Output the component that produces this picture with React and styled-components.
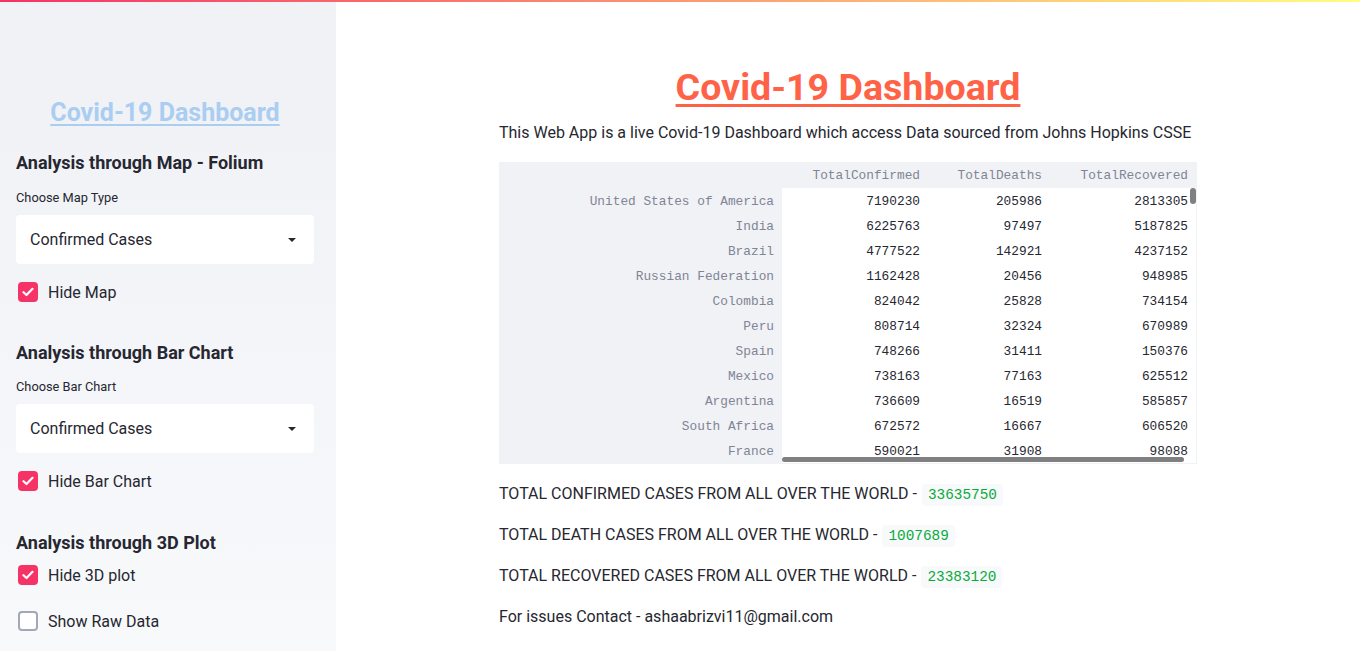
import React from "react";
import styled, { createGlobalStyle } from "styled-components";

const Global = createGlobalStyle`
  html, body { margin: 0; padding: 0; }
  body {
    font-family: Roboto, "Noto Sans", sans-serif;
    color: #262730;
    background: #ffffff;
  }
  * { box-sizing: border-box; }
`;

const Page = styled.div`
  width: 1360px;
  height: 651px;
  overflow: hidden;
  position: relative;
  display: flex;
`;

const Decoration = styled.div`
  position: absolute;
  top: 0;
  left: 0;
  right: 0;
  height: 2px;
  background: linear-gradient(90deg, #f63366, #fffd80);
  z-index: 5;
`;

const Sidebar = styled.aside`
  width: 336px;
  flex: 0 0 336px;
  height: 651px;
  background: linear-gradient(180deg, #f0f2f6 0%, #f0f2f6 15%, #f8f9fb 100%);
  padding: 98px 22px 0 16px;
  display: flex;
  flex-direction: column;
`;

const SideTitle = styled.h1`
  margin: 0;
  font-size: 25px;
  line-height: 30px;
  font-weight: 700;
  text-align: center;
  color: #aacdf2;
  text-decoration: underline;
  text-underline-offset: 3px;
`;

const SideHeading = styled.h3`
  margin: ${(p) => p.$top}px 0 0 0;
  font-size: 18px;
  line-height: 25px;
  font-weight: 700;
  color: #262730;
  white-space: nowrap;
`;

const WidgetLabel = styled.label`
  display: block;
  margin-top: ${(p) => p.$top}px;
  font-size: 12.8px;
  line-height: 18px;
  color: #262730;
`;

const SelectBox = styled.div`
  margin-top: 8px;
  height: 49px;
  background: #ffffff;
  border-radius: 4px;
  display: flex;
  align-items: center;
  justify-content: space-between;
  padding: 0 18px 0 14px;
  font-size: 16px;
  color: #262730;
`;

const Caret = styled.span`
  width: 0;
  height: 0;
  border-left: 4px solid transparent;
  border-right: 4px solid transparent;
  border-top: 4px solid #262730;
`;

const CheckRow = styled.div`
  margin-top: ${(p) => p.$top}px;
  display: flex;
  align-items: center;
  gap: 10px;
  height: 20px;
  padding-left: 2px;
  font-size: 16px;
  color: #262730;
`;

const Box = styled.span`
  width: 20px;
  height: 20px;
  border-radius: 4px;
  display: flex;
  align-items: center;
  justify-content: center;
  background: ${(p) => (p.$checked ? "#f63366" : "#ffffff")};
  border: ${(p) => (p.$checked ? "none" : "2px solid #a3a8b8")};
`;

const Main = styled.main`
  flex: 1;
  display: flex;
  justify-content: center;
  padding-top: 64px;
`;

const Content = styled.div`
  width: 698px;
  display: flex;
  flex-direction: column;
`;

const MainTitle = styled.h1`
  margin: 0;
  font-size: 37.6px;
  line-height: 46px;
  font-weight: 700;
  text-align: center;
  color: #ff6347;
  text-decoration: underline;
  text-underline-offset: 4px;
`;

const Para = styled.p`
  margin: ${(p) => p.$top}px 0 0 0;
  font-size: 16px;
  line-height: 24px;
  color: #262730;
`;

const Code = styled.code`
  font-family: "Liberation Mono", "DejaVu Sans Mono", monospace;
  font-size: 14.4px;
  color: #09ab3b;
  background: #f8f9fa;
  border-radius: 4px;
  padding: 3px 6px;
  margin-left: 1px;
`;

const TableWrap = styled.div`
  margin-top: 17px;
  position: relative;
  width: 698px;
  height: 302px;
  overflow: hidden;
  background: #f0f2f6;
  font-family: "Liberation Mono", "DejaVu Sans Mono", monospace;
  font-size: 12.8px;
`;

const Grid = styled.div`
  display: grid;
  grid-template-columns: 283px 146px 122px 146px;
  grid-auto-rows: 25px;
  grid-template-rows: 26px;
`;

const Cell = styled.div`
  display: flex;
  align-items: center;
  justify-content: flex-end;
  padding: 1px 8px 0 0;
  white-space: nowrap;
  background: ${(p) => (p.$data ? "#ffffff" : "transparent")};
  color: ${(p) => (p.$data ? "#262730" : "#808495")};
`;

const HScroll = styled.div`
  position: absolute;
  left: 283px;
  top: 295px;
  width: 402px;
  height: 5px;
  border-radius: 3px;
  background: #808080;
`;

const VScroll = styled.div`
  position: absolute;
  left: 691px;
  top: 26px;
  width: 6px;
  height: 16px;
  border-radius: 3px;
  background: #808080;
`;

const rows = [
  ["United States of America", "7190230", "205986", "2813305"],
  ["India", "6225763", "97497", "5187825"],
  ["Brazil", "4777522", "142921", "4237152"],
  ["Russian Federation", "1162428", "20456", "948985"],
  ["Colombia", "824042", "25828", "734154"],
  ["Peru", "808714", "32324", "670989"],
  ["Spain", "748266", "31411", "150376"],
  ["Mexico", "738163", "77163", "625512"],
  ["Argentina", "736609", "16519", "585857"],
  ["South Africa", "672572", "16667", "606520"],
  ["France", "590021", "31908", "98088"],
];

const Check = () => (
  <svg width="12" height="10" viewBox="0 0 12 10">
    <path d="M1.5 5.2 L4.5 8 L10.5 1.8" fill="none" stroke="#ffffff" strokeWidth="2.2" strokeLinecap="round" strokeLinejoin="round" />
  </svg>
);

const Checkbox = ({ checked, label, top }) => (
  <CheckRow $top={top}>
    <Box $checked={checked}>{checked && <Check />}</Box>
    <span>{label}</span>
  </CheckRow>
);

export default function App() {
  return (
    <Page>
      <Global />
      <Decoration />
      <Sidebar>
        <SideTitle>Covid-19 Dashboard</SideTitle>
        <SideHeading $top={22}>Analysis through Map - Folium</SideHeading>
        <WidgetLabel $top={14}>Choose Map Type</WidgetLabel>
        <SelectBox>
          <span>Confirmed Cases</span>
          <Caret />
        </SelectBox>
        <Checkbox checked label="Hide Map" top={18} />
        <SideHeading $top={38}>Analysis through Bar Chart</SideHeading>
        <WidgetLabel $top={13}>Choose Bar Chart</WidgetLabel>
        <SelectBox>
          <span>Confirmed Cases</span>
          <Caret />
        </SelectBox>
        <Checkbox checked label="Hide Bar Chart" top={18} />
        <SideHeading $top={39}>Analysis through 3D Plot</SideHeading>
        <Checkbox checked label="Hide 3D plot" top={10} />
        <Checkbox checked={false} label="Show Raw Data" top={26} />
      </Sidebar>
      <Main>
        <Content>
          <MainTitle>Covid-19 Dashboard</MainTitle>
          <Para $top={11}>
            This Web App is a live Covid-19 Dashboard which access Data sourced from Johns Hopkins CSSE
          </Para>
          <TableWrap>
            <Grid>
              <Cell />
              <Cell>TotalConfirmed</Cell>
              <Cell>TotalDeaths</Cell>
              <Cell>TotalRecovered</Cell>
              {rows.map((r) => (
                <React.Fragment key={r[0]}>
                  <Cell>{r[0]}</Cell>
                  <Cell $data>{r[1]}</Cell>
                  <Cell $data>{r[2]}</Cell>
                  <Cell $data>{r[3]}</Cell>
                </React.Fragment>
              ))}
            </Grid>
            <HScroll />
            <VScroll />
          </TableWrap>
          <Para $top={17.5}>
            TOTAL CONFIRMED CASES FROM ALL OVER THE WORLD - <Code>33635750</Code>
          </Para>
          <Para $top={16}>
            TOTAL DEATH CASES FROM ALL OVER THE WORLD - <Code>1007689</Code>
          </Para>
          <Para $top={16.2}>
            TOTAL RECOVERED CASES FROM ALL OVER THE WORLD - <Code>23383120</Code>
          </Para>
          <Para $top={16.2}>For issues Contact - ashaabrizvi11@gmail.com</Para>
        </Content>
      </Main>
    </Page>
  );
}
